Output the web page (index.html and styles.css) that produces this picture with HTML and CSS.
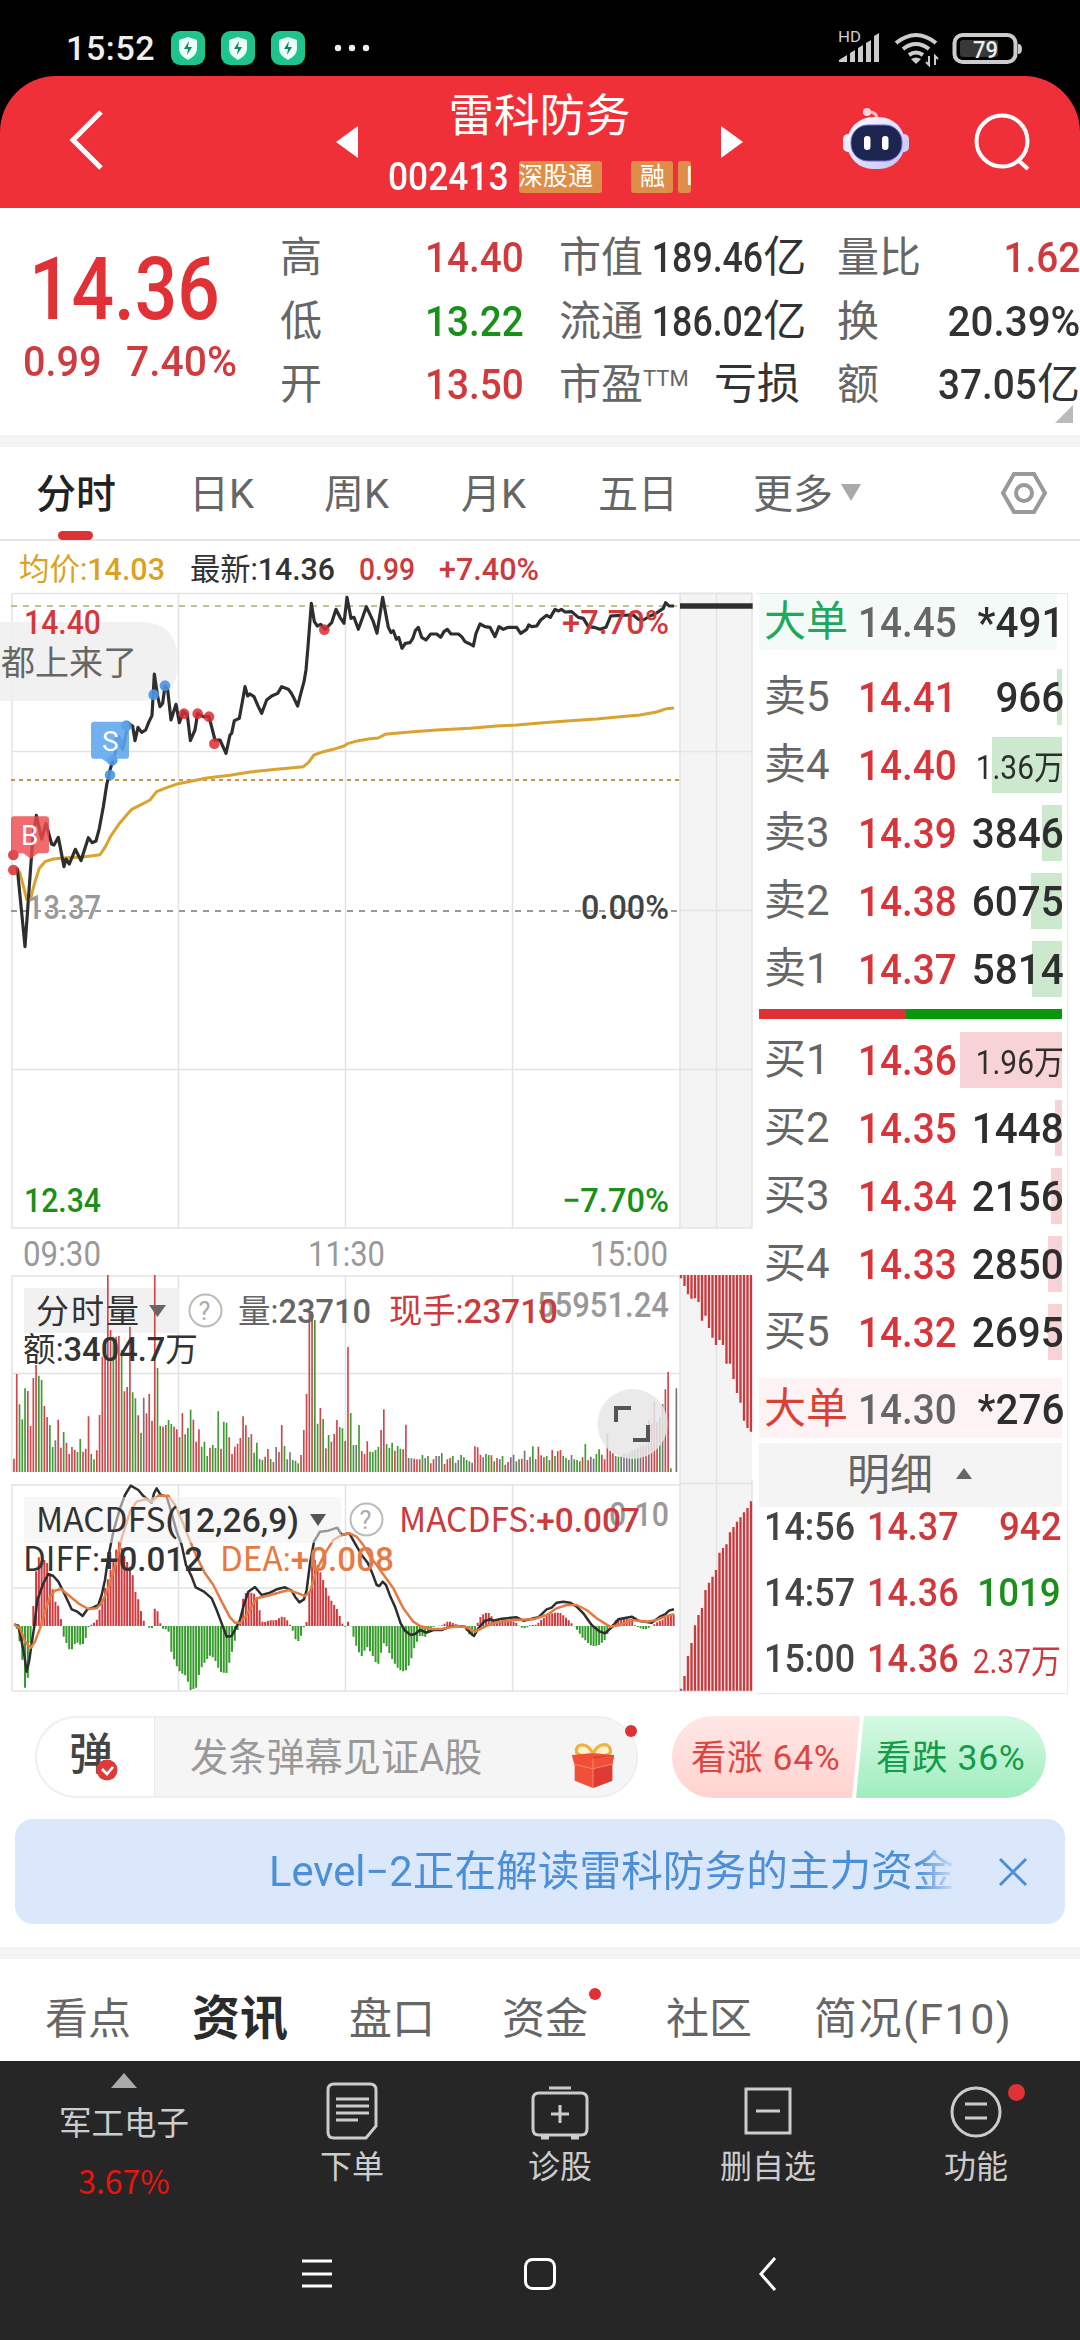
FILE: index.html
```html
<!DOCTYPE html>
<html lang="zh-CN">
<head>
<meta charset="utf-8">
<title>雷科防务 002413</title>
<link rel="stylesheet" href="styles.css">
</head>
<body>
<div class="status">
  <span class="clock">15:52</span>
  <svg class="shields" viewBox="0 0 134 34">
    <g id="sh"><rect width="34" height="34" rx="9" fill="#1fc48c"/><path d="M17 6l9 3v8c0 6-4 9-9 12-5-3-9-6-9-12V9z" fill="#eafff6"/><path d="M18 10l-5 8h4l-1 6 5-8h-4z" fill="#14865f"/></g>
    <use href="#sh" x="50"/><use href="#sh" x="100"/>
  </svg>
  <svg class="dots" viewBox="0 0 36 8"><circle cx="4" cy="4" r="3.2"/><circle cx="18" cy="4" r="3.2"/><circle cx="32" cy="4" r="3.2"/></svg>
  <svg class="radio" viewBox="0 0 190 40">
    <text x="1" y="14" font-size="15" textLength="23" lengthAdjust="spacingAndGlyphs">HD</text>
    <path d="M2 34v-2l8-5v7zM13 34V25l5-3v12zM21 34V20l5-3v17zM29 34V15l5-3v22zM37 34V8l5-3v29z"/>
    <path d="M59 15q20-16 40 0M66 21q13-10 26 0M72 27q7-5 14 0" fill="none" stroke="#ccc" stroke-width="4"/>
    <path d="M74 31q5-3 10 0l-5 5z"/>
    <path d="M92 28v9l-3-3M98 37v-9l3 3" fill="none" stroke="#ccc" stroke-width="2"/>
    <rect x="117.500" y="7" width="61" height="27" rx="8" fill="none" stroke="#ccc" stroke-width="4"/>
    <rect x="123" y="12" width="38" height="17" rx="3" fill="#383838"/>
    <path d="M181 16q4 0 4 5t-4 5z"/>
    <text x="136" y="29.500" font-size="23" font-weight="500" fill="#eee" textLength="25" lengthAdjust="spacingAndGlyphs">79</text>
  </svg>
</div>

<header class="top">
  <svg class="back" viewBox="0 0 36 62"><path d="M32 3L4 31l28 28"/></svg>
  <i class="tri left"></i>
  <div class="stock">
    <div class="name">雷科防务</div>
    <div class="code"><span class="n">002413</span><b class="tag t1">深股通</b><b class="tag t2">融</b><b class="tag t3">I</b></div>
  </div>
  <i class="tri right"></i>
  <svg class="robot" viewBox="0 0 68 64">
    <defs><linearGradient id="rb" x1="0" y1="0" x2="1" y2="1"><stop offset="0" stop-color="#fff"/><stop offset="1" stop-color="#c3c2fb"/></linearGradient></defs>
    <path d="M35 12c0-5-3-7-8-7" fill="none" stroke="#f9c2cd" stroke-width="3"/><circle cx="25" cy="5" r="4" fill="#fbd3da"/>
    <rect x="1" y="27" width="12" height="18" rx="5" fill="#eceafd"/><rect x="55" y="27" width="12" height="18" rx="5" fill="#cfcdfb"/>
    <rect x="5" y="10" width="58" height="52" rx="26" fill="url(#rb)"/>
    <rect x="9" y="18" width="51" height="36" rx="17" fill="#1b2550" stroke="#7567d8" stroke-width="1"/>
    <rect x="22" y="29" width="6.500" height="14" rx="3.200" fill="#fff"/><rect x="40" y="29" width="6.500" height="14" rx="3.200" fill="#fff"/>
  </svg>
  <svg class="search" viewBox="0 0 58 58"><circle cx="28" cy="28" r="25.500"/><path d="M44 47l10 9"/></svg>
</header>

<section class="quote">
  <div class="last">
    <div class="big"><span class="n">14.36</span></div>
    <div class="chg"><span class="n c1">0.99</span><span class="n">7.40%</span></div>
  </div>
  <dl class="qcol q1"><dt>高</dt><dd class="r"><span class="n">14.40</span></dd><dt>低</dt><dd class="g"><span class="n">13.22</span></dd><dt>开</dt><dd class="r"><span class="n">13.50</span></dd></dl>
  <dl class="qcol q2"><dt>市值</dt><dd><span class="n">189.46</span>亿</dd><dt>流通</dt><dd><span class="n">186.02</span>亿</dd><dt>市盈<sup>TTM</sup></dt><dd>亏损</dd></dl>
  <dl class="qcol q3"><dt>量比</dt><dd class="r"><span class="n">1.62</span></dd><dt>换</dt><dd><span class="n">20.39%</span></dd><dt>额</dt><dd><span class="n">37.05</span>亿</dd></dl>
  <i class="corner"></i>
</section>

<nav class="periods">
  <span class="on">分时</span><span>日K</span><span>周K</span><span>月K</span><span>五日</span><span class="more">更多<i></i></span>
  <svg viewBox="0 0 46 44"><path d="M13 3h20l11 19-11 19H13L2 22z"/><circle cx="23" cy="22" r="8"/></svg>
</nav>

<main class="trade">
  <div class="charts">
    <svg class="info" viewBox="0 541 756 48">
      <g font-size="31">
        <text x="19" y="580" fill="#dba21f" textLength="146" lengthAdjust="spacingAndGlyphs">均价:<tspan font-weight="500">14.03</tspan></text>
        <text x="190" y="580" fill="#333" textLength="145" lengthAdjust="spacingAndGlyphs">最新:<tspan font-weight="500">14.36</tspan></text>
        <g fill="#cb3a3c" font-weight="500"><text x="359" y="580" textLength="56" lengthAdjust="spacingAndGlyphs">0.99</text>
        <text x="439" y="580" textLength="100" lengthAdjust="spacingAndGlyphs">+7.40%</text></g>
      </g>
    </svg>
    <svg class="price" viewBox="0 589 756 643">
      <rect x="679" y="592" width="73" height="636" fill="#f4f4f4"/>
      <path class="grid" d="M12 593.500H752M12 751.500H752M12 1069.500H752M12 1228H752M12 593V1228M178.500 593V1228M345.500 593V1228M512.500 593V1228M680 593V1228M716.500 593V1228M752 593V1228M680 910.500H752"/>
      <path d="M11 606H679" stroke="#b3a96f" stroke-width="1.500" stroke-dasharray="6 6" fill="none"/>
      <path d="M11 780H679" stroke="#c69846" stroke-width="2" stroke-dasharray="4 4" fill="none"/>
      <path d="M11 911H679" stroke="#999" stroke-width="2" stroke-dasharray="6 6" fill="none"/>
      <path d="M0 622H140q38 0 38 39.500T140 701H0z" fill="#eee" opacity=".85"/>
      <text x="1" y="675" font-size="34" fill="#666" textLength="136">都上来了</text>
      <g transform="translate(0 540) scale(.33333)" fill="none" stroke-linejoin="round">
        <polyline stroke="#d9a32f" stroke-width="9" points="48,982 60,1000 72,1045 80,1078 92,1075 105,1025 118,985 135,965 160,957 200,953 250,951 300,944 315,922 333,887 360,848 395,808 425,793 450,780 470,755 500,743 535,731 580,722 620,714 690,706 750,696 830,688 910,680 925,668 942,645 970,635 1000,628 1032,618 1045,610 1075,602 1110,596 1135,594 1155,583 1230,576 1310,570 1410,565 1490,558 1550,555 1630,548 1710,542 1790,537 1860,530 1920,525 1970,516 2000,506 2022,504"/>
        <polyline stroke="#2e2e2e" stroke-width="9.500" points="52,985 75,1220 95,940 100,880 109,826 125,897 138,850 155,912 162,915 175,892 192,980 198,957 208,972 226,928 243,962 265,893 276,908 288,903 298,865 310,800 320,735 330,690 345,640 357,590 368,628 385,550 398,558 405,602 414,562 425,577 437,570 447,545 456,527 463,402 473,470 480,500 488,490 495,438 503,450 513,540 528,493 538,548 550,515 562,525 571,602 585,570 593,520 610,530 627,530 645,600 660,600 678,640 690,585 695,580 703,542 718,535 728,480 735,440 743,468 750,462 762,470 775,500 785,520 800,480 815,468 833,460 845,440 865,448 873,458 882,475 893,498 900,470 912,425 918,390 924,320 934,190 943,245 952,258 962,253 975,268 995,248 1008,208 1020,232 1032,250 1041,172 1053,235 1062,232 1075,268 1087,235 1099,200 1120,245 1131,280 1148,172 1165,262 1173,278 1180,272 1189,298 1196,292 1206,325 1216,310 1230,308 1238,296 1246,272 1255,262 1265,292 1278,300 1292,282 1310,282 1322,292 1332,275 1342,268 1353,282 1375,282 1385,290 1395,305 1410,312 1420,318 1428,280 1440,252 1455,260 1470,262 1485,290 1497,260 1510,268 1525,262 1550,262 1562,280 1580,268 1586,255 1595,260 1610,258 1622,240 1640,226 1651,232 1665,208 1676,213 1684,208 1695,216 1715,215 1735,232 1750,235 1765,260 1782,262 1800,268 1818,262 1832,228 1860,226 1900,225 1915,238 1930,240 1950,228 1965,222 1980,212 1990,205 1997,188 2007,198 2022,198"/>
        <path d="M2040 198H2258" stroke="#2e2e2e" stroke-width="17"/>
        <g fill="#db2b33" opacity=".85"><circle cx="40" cy="945" r="16"/><circle cx="40" cy="990" r="16"/><circle cx="552" cy="521" r="16"/><circle cx="593" cy="521" r="16"/><circle cx="627" cy="530" r="16"/><circle cx="643" cy="611" r="16"/><circle cx="973" cy="269" r="16"/></g>
        <g fill="#4e93e4" opacity=".9"><circle cx="495" cy="437" r="16"/><circle cx="461" cy="464" r="16"/><circle cx="379" cy="557" r="16"/><circle cx="354" cy="606" r="16"/><circle cx="337" cy="661" r="16"/><circle cx="330" cy="705" r="16"/></g>
        <path d="M282 545h96q9 0 9 9v93q0 9-9 9h-28l-25 14-20-14h-23q-9 0-9-9v-93q0-9 9-9z" fill="#5ea5ee" opacity=".88"/>
        <path d="M42 829h96q9 0 9 9v93q0 9-9 9h-24l-22 16-22-16H42q-9 0-9-9v-93q0-9 9-9z" fill="#ec4a4d" opacity=".82"/>
      </g>
      <text x="102" y="751" font-size="28" fill="#fff">S</text><text x="21" y="845" font-size="28" fill="#fff">B</text>
      <g font-size="34" font-weight="500">
        <text x="24" y="634" fill="#d2393d" textLength="77" lengthAdjust="spacingAndGlyphs">14.40</text>
        <text x="27" y="919" fill="#999" textLength="74" lengthAdjust="spacingAndGlyphs">13.37</text>
        <text x="24" y="1212" fill="#1a8f1a" textLength="77" lengthAdjust="spacingAndGlyphs">12.34</text>
        <text x="562" y="634" fill="#d2393d" textLength="107" lengthAdjust="spacingAndGlyphs">+7.70%</text>
        <text x="581" y="919" fill="#444" textLength="88" lengthAdjust="spacingAndGlyphs">0.00%</text>
        <text x="562" y="1212" fill="#1a8f1a" textLength="107" lengthAdjust="spacingAndGlyphs">−7.70%</text>
      </g>
    </svg>
    <svg class="axis" viewBox="0 1232 756 40">
      <g font-size="35" fill="#999"><text x="23" y="1266" textLength="78" lengthAdjust="spacingAndGlyphs">09:30</text><text x="308" y="1266" textLength="77" lengthAdjust="spacingAndGlyphs">11:30</text><text x="590" y="1266" textLength="78" lengthAdjust="spacingAndGlyphs">15:00</text></g>
    </svg>
    <svg class="volume" viewBox="0 1272 756 208">
      <rect x="680" y="1275" width="72" height="205" fill="#f4f4f4"/>
      <path class="grid" d="M12 1276H680M12 1373.500H680M12 1275V1472M178.500 1275V1472M345.500 1275V1472M512.500 1275V1472M680 1275V1480M716.500 1275V1480"/>
      <rect x="24" y="1288" width="155" height="45" fill="#efefef" opacity=".9"/>
      <g transform="translate(0 1180) scale(.33333)" fill="none" stroke-width="5"><path id="vr" stroke="#d0474b"/><path id="vg" stroke="#3f9b34"/><path id="vk" stroke="#77737a"/><path id="vside" stroke="#c9393e" stroke-width="7"/></g>
      <g font-size="33" fill="#333">
        <text x="36" y="1323" textLength="103">分时量</text><path d="M149 1305h17l-8.500 12z" fill="#666"/>
        <text x="23" y="1361" textLength="175" lengthAdjust="spacingAndGlyphs">额:<tspan font-weight="500">3404.7</tspan>万</text>
        <text x="238" y="1323" fill="#666" textLength="133" lengthAdjust="spacingAndGlyphs">量:<tspan font-weight="500">23710</tspan></text>
      </g>
      <circle cx="205.500" cy="1310.500" r="16" fill="none" stroke="#bbb" stroke-width="2"/><text x="198.500" y="1320" font-size="25" fill="#aaa">?</text>
      <text x="537" y="1317" font-size="35" fill="#999" font-weight="500" textLength="132" lengthAdjust="spacingAndGlyphs">55951.24</text>
      <text x="389" y="1323" font-size="34" fill="#cb3a3c" textLength="169" lengthAdjust="spacingAndGlyphs">现手:<tspan font-weight="500">23710</tspan></text>
      <circle cx="632.500" cy="1424" r="35" fill="#e7e7e7" opacity=".86"/>
      <path d="M616 1422v-14h15M633 1440h15v-15" fill="none" stroke="#555" stroke-width="4"/>
    </svg>
    <svg class="macd" viewBox="0 1480 756 214">
      <rect x="680" y="1480" width="72" height="211" fill="#f4f4f4"/>
      <path class="grid" d="M12 1485H680M680 1483.500H752M12 1588H680M12 1691H752M12 1484V1691M178.500 1484V1691M345.500 1484V1691M512.500 1484V1691M680 1480V1691M716.500 1480V1691M752 1480V1691"/>
      <g transform="translate(0 1180) scale(.33333)" fill="none" stroke-width="6"><path id="mr" stroke="#d2393d"/><path id="mg" stroke="#359b2a"/><path id="mside" stroke="#c9393e" stroke-width="7"/>
        <g stroke-width="7.500" stroke-linejoin="round">
        <polyline stroke="#2e2e2e" points="42,1333 55,1337 62,1370 72,1420 80,1475 88,1440 95,1390 102,1345 112,1260 130,1210 145,1182 160,1188 175,1205 195,1245 215,1288 232,1295 248,1308 262,1288 280,1282 295,1275 305,1245 315,1200 325,1130 340,1055 360,985 375,945 392,917 415,930 430,948 445,960 455,968 462,940 470,925 482,945 500,950 515,1000 530,1055 545,1095 558,1155 575,1190 587,1222 612,1235 635,1255 650,1290 665,1330 680,1370 695,1368 707,1345 720,1320 730,1280 745,1235 765,1221 785,1245 810,1238 830,1228 855,1222 875,1232 885,1250 898,1267 912,1258 920,1230 930,1150 942,1085 960,1055 985,1052 1012,1043 1025,1065 1048,1060 1065,1090 1085,1125 1103,1148 1115,1175 1130,1215 1138,1218 1148,1205 1158,1215 1172,1252 1185,1280 1202,1330 1215,1352 1232,1365 1245,1362 1260,1350 1280,1358 1300,1350 1325,1350 1350,1340 1370,1338 1395,1340 1410,1358 1422,1368 1435,1345 1455,1322 1472,1318 1480,1322 1505,1316 1550,1312 1570,1322 1590,1318 1615,1312 1640,1288 1655,1283 1670,1268 1690,1265 1710,1268 1730,1280 1750,1300 1775,1335 1800,1355 1815,1360 1835,1342 1855,1318 1895,1310 1915,1322 1955,1328 1980,1310 1995,1303 2007,1292 2022,1288"/>
        <polyline stroke="#e57a43" points="42,1333 60,1345 75,1385 92,1403 105,1385 120,1345 135,1295 150,1250 165,1232 183,1227 205,1245 235,1270 265,1287 290,1285 305,1270 325,1225 345,1160 365,1075 390,995 410,965 435,958 455,965 475,947 505,947 525,975 545,1020 565,1070 590,1130 615,1180 640,1215 665,1265 690,1312 705,1328 722,1328 740,1305 770,1255 800,1248 830,1240 865,1230 895,1240 915,1248 930,1235 950,1170 975,1120 1000,1080 1025,1065 1048,1060 1070,1070 1090,1095 1110,1130 1130,1155 1155,1190 1180,1225 1210,1285 1240,1325 1260,1338 1295,1347 1325,1347 1370,1338 1400,1342 1425,1355 1455,1340 1485,1328 1540,1320 1600,1318 1640,1305 1670,1285 1700,1275 1730,1275 1760,1290 1790,1315 1830,1340 1860,1335 1895,1320 1940,1325 1970,1320 2000,1308 2022,1303"/></g>
      </g>
      <rect x="24" y="1497" width="317" height="46" fill="#f1f1f1" opacity=".55"/>
      <g font-size="34" fill="#333">
        <text x="36" y="1532" textLength="263" lengthAdjust="spacingAndGlyphs"><tspan class="cj">MACDFS</tspan><tspan font-weight="500">(12,26,9)</tspan></text><path d="M310 1514h16l-8 12z" fill="#555"/>
        <text x="23" y="1571" textLength="180" lengthAdjust="spacingAndGlyphs"><tspan class="cj">DIFF</tspan>:<tspan font-weight="500">+0.012</tspan></text>
        <text x="220" y="1571" fill="#e57a43" textLength="174" lengthAdjust="spacingAndGlyphs"><tspan class="cj">DEA</tspan>:<tspan font-weight="500">+0.008</tspan></text>
      </g>
      <circle cx="366.500" cy="1519.500" r="16" fill="none" stroke="#bbb" stroke-width="2"/><text x="359.500" y="1529" font-size="25" fill="#aaa">?</text>
      <text x="609" y="1526" font-size="34" fill="#999" font-weight="500" textLength="60" lengthAdjust="spacingAndGlyphs">0.10</text>
      <text x="399" y="1532" font-size="34" fill="#cb3a3c" textLength="241" lengthAdjust="spacingAndGlyphs"><tspan class="cj">MACDFS</tspan>:<tspan font-weight="500">+0.007</tspan></text>
    </svg>
  </div>

  <aside class="book">
    <div class="row large sell"><em>大单</em><span class="n p">14.45</span><span class="n v">*491</span></div>
    <div class="rows asks">
      <div class="row"><em>卖5</em><span class="n p">14.41</span><span class="n v">966</span><i style="width:5px"></i></div>
      <div class="row"><em>卖4</em><span class="n p">14.40</span><span class="v s">1.36万</span><i style="width:70px"></i></div>
      <div class="row"><em>卖3</em><span class="n p">14.39</span><span class="n v">3846</span><i style="width:20px"></i></div>
      <div class="row"><em>卖2</em><span class="n p">14.38</span><span class="n v">6075</span><i style="width:31px"></i></div>
      <div class="row"><em>卖1</em><span class="n p">14.37</span><span class="n v">5814</span><i style="width:30px"></i></div>
    </div>
    <div class="ratio"></div>
    <div class="rows bids">
      <div class="row"><em>买1</em><span class="n p">14.36</span><span class="v s">1.96万</span><i style="width:102px"></i></div>
      <div class="row"><em>买2</em><span class="n p">14.35</span><span class="n v">1448</span><i style="width:7px"></i></div>
      <div class="row"><em>买3</em><span class="n p">14.34</span><span class="n v">2156</span><i style="width:11px"></i></div>
      <div class="row"><em>买4</em><span class="n p">14.33</span><span class="n v">2850</span><i style="width:14px"></i></div>
      <div class="row"><em>买5</em><span class="n p">14.32</span><span class="n v">2695</span><i style="width:14px"></i></div>
    </div>
    <div class="row large buy"><em>大单</em><span class="n p">14.30</span><span class="n v">*276</span></div>
    <div class="detail">明细<i></i></div>
    <div class="ticks">
      <div><span class="n t">14:56</span><span class="n p">14.37</span><span class="n v">942</span></div>
      <div><span class="n t">14:57</span><span class="n p">14.36</span><span class="n v g">1019</span></div>
      <div><span class="n t">15:00</span><span class="n p">14.36</span><span class="v s">2.37万</span></div>
    </div>
  </aside>
</main>

<section class="social">
  <div class="danmu">
    <div class="ico">弹<svg viewBox="0 0 22 22"><circle cx="11" cy="11" r="10.500" fill="#dd3a38"/><path d="M6 10l5 5 6-7" fill="none" stroke="#fff" stroke-width="2.600"/></svg></div>
    <div class="ph">发条弹幕见证A股
      <svg viewBox="0 0 48 54"><path d="M24 14C18 0 4 2 6 12q3 6 18 2Q40 18 43 12C44 1 30 0 24 14z" fill="#fff3cf" stroke="#efb23e" stroke-width="3.500"/><path d="M1 15l23-2 23 2-2 11v17L24 51 4 43V26z" fill="#ee5038"/><path d="M24 17v34l21-8V26l2-11z" fill="#df3b35"/><path d="M1 15l23 4 23-4-2 10-21 5-20-5z" fill="#f0503a"/><path d="M24 19v32M3 25l21 5 21-5" stroke="#ff8a66" fill="none"/></svg>
    </div>
    <i class="dot"></i>
  </div>
  <div class="vote"><span class="up">看涨 64%</span><span class="down">看跌 36%</span></div>
</section>

<section class="banner"><p>Level−2正在解读雷科防务的主力资金</p><svg viewBox="0 0 28 28"><path d="M1 1l26 26M27 1L1 27"/></svg></section>

<nav class="tabs"><span>看点</span><span class="on">资讯</span><span>盘口</span><span>资金<i class="dot"></i></span><span>社区</span><span class="f10">简况(F10)</span></nav>

<footer>
  <div class="tools">
    <div class="idx"><i></i><b>军工电子</b><span>3.67%</span></div>
    <div><svg viewBox="0 0 60 60"><path d="M12 3h36q6 0 6 6v36l-10 12H12q-6 0-6-6V9q0-6 6-6zM14 18h33M14 25h33M14 32h33M14 39h22"/></svg>下单</div>
    <div><svg viewBox="0 0 60 60"><path d="M9 12h42q6 0 6 6v30q0 6-6 6H9q-6 0-6-6V18q0-6 6-6zM19 7h22M30 24v18M21 33h18M11 57h8M41 57h8"/></svg>诊股</div>
    <div><svg viewBox="0 0 60 60"><path d="M8 8h44v44H8zM18 30h24"/></svg>删自选</div>
    <div><svg viewBox="0 0 60 60"><circle cx="30" cy="31" r="24"/><path d="M19 23h22M19 37h22"/></svg>功能<i class="dot"></i></div>
  </div>
  <svg class="sys" viewBox="0 0 1080 60"><path d="M302 16h30M302 29h30M302 41h30"/><rect x="525.500" y="14.500" width="29" height="29" rx="7"/><path d="M775 13l-14 16 14 16"/></svg>
</footer>
<script src="script.js"></script>
</body>
</html>
```
FILE: styles.css
```css
* { box-sizing: border-box; }
body { margin: 0; width: 1080px; height: 2340px; overflow: hidden; background: #fff; color: #333; font-family: Roboto, "Noto Sans CJK SC", sans-serif; font-size: 42px; }
i, em, b { font-style: normal; font-weight: 400; }
svg { display: block; flex: none; overflow: visible; }
.cj { font-family: "Noto Sans CJK SC", sans-serif; }
.n { display: inline-block; font-weight: 500; transform: scaleX(.9); transform-origin: left; white-space: nowrap; }
.r { color: #d03a3c; }
.g { color: #1a8f1a !important; }
.dot { display: block; width: 12px; height: 12px; border-radius: 50%; background: #e03236; }

/* The black bar runs on behind the header's rounded corners. */
.status { height: 140px; margin-bottom: -64px; padding: 16px 60px 60px 66px; background: #000; display: flex; align-items: center; }
.clock { width: 105px; font: 500 34px/40px Roboto, sans-serif; letter-spacing: .6px; color: #eee; }
.shields { width: 134px; height: 34px; }
.dots { width: 36px; height: 8px; margin-left: 29px; fill: #eee; }
.radio { width: 190px; height: 40px; margin-left: auto; fill: #ccc; margin-right: -7px; }

.top { position: relative; height: 132px; background: #f03038; border-radius: 56px 56px 0 0; display: flex; align-items: center; padding: 0 50px 0 69px; color: #fff; }
.back { width: 36px; height: 62px; fill: none; stroke: #fff; stroke-width: 5; margin-top: -5px; }
.tri { width: 0; height: 0; border: 16px solid transparent; flex: none; margin-top: -1px; }
.tri.left { border-right: 22px solid #fff; border-left: 0; margin-left: 231px; }
.tri.right { border-left: 22px solid #fff; border-right: 0; margin-left: 0; }
.stock { width: 363px; height: 132px; text-align: center; padding-top: 8px; }
.name { font-size: 45.5px; line-height: 66px; }
.code { display: flex; align-items: center; height: 54px; padding-left: 30px; }
.code .n { width: 131px; font-size: 38px; text-align: left; transform: scaleX(.93); }
.tag { height: 32px; line-height: 32px; font-size: 25px; background: #df8e49; border-radius: 3px; overflow: hidden; text-align: left; }
.t1 { width: 83px; text-indent: -1px; }
.t2 { width: 42px; margin-left: 29px; text-indent: 9px; }
.t3 { width: 13px; margin-left: 5px; text-indent: 8px; }
.robot { width: 68px; height: 64px; margin-left: 99px; margin-top: -7px; }
.search { width: 58px; height: 58px; margin-left: auto; fill: none; stroke: #fff; stroke-width: 4; margin-right: -2px; }

.quote { height: 239px; border-bottom: 12px solid #f3f3f3; display: flex; padding-top: 18px; position: relative; }
.last { width: 280px; color: #e03236; }
.big { font-size: 87px; line-height: 88px; padding: 19px 0 0 29px; height: 107px; }
.big .n { transform: scaleX(.86); }
.chg { font-size: 43px; line-height: 56px; padding-left: 23px; color: #cf3b3e; display: flex; }
.chg .c1 { width: 103px; }
.chg .n { transform: scaleX(.92); }
.chg .n + .n { transform: scaleX(.95); }
.qcol { margin: 0; display: grid; grid-template-rows: repeat(3, 63.5px); line-height: 63px; white-space: nowrap; }
.qcol dt { color: #666; }
.qcol dd { margin: 0; text-align: right; font-size: 43px; }
.qcol .n { transform-origin: right; }
.q1 { width: 244px; grid-template-columns: 60px 184px; }
.q2 { width: 241px; margin-left: 35px; grid-template-columns: 90px 151px; }
.q3 { width: 243px; margin-left: 37px; grid-template-columns: 85px 158px; }
.q2 .n { margin-left: -20px; transform: scaleX(.83); }
.q3 .n { transform: scaleX(.9); }
.q3 dd:nth-of-type(2) .n { transform: scaleX(.94); }
.qcol sup { font-size: 22px; line-height: 0; vertical-align: 13px; }
.corner { position: absolute; right: 7px; top: 197px; border: 9px solid transparent; border-right-color: #bbb; border-bottom-color: #bbb; }

.periods { height: 94px; border-bottom: 2px solid #e6e6e6; display: flex; align-items: center; position: relative; font-size: 40px; color: #666; padding-left: 36px; line-height: 92px; }
.periods span { width: 137px; padding-top: 3px; }
.periods span:nth-child(1) { width: 153px; }
.periods span:nth-child(2) { width: 135px; }
.periods .on { color: #222; font-weight: 500; position: relative; }
.periods .on::after { content: ""; position: absolute; left: 22px; bottom: 1px; width: 35px; height: 9px; border-radius: 5px; background: #dd3236; }
.periods span:nth-child(5) { width: 155px; }
.periods .more { width: auto; flex: 1; display: flex; align-items: center; gap: 8px; }
.more i { border: 10px solid transparent; border-top: 17px solid #aaa; border-bottom: 0; margin-top: -4px; }
.periods svg { width: 46px; height: 44px; margin-right: 33px; fill: none; stroke: #999; stroke-width: 4; }

.trade { height: 1153px; display: flex; }
.charts { width: 756px; display: flex; flex-direction: column; }
.info { height: 48px; } .price { height: 643px; } .axis { height: 40px; } .volume { height: 208px; } .macd { height: 214px; }
.grid { stroke: #e3e3e3; stroke-width: 1.5; fill: none; }
.book { width: 312px; margin-top: 52px; height: 1101px; border: 1px solid #e9e9e9; border-width: 1px 1px 1px 0; padding: 0 5px 0 3px; }
.row { position: relative; display: grid; grid-template-columns: 94px 106px 100px; padding-left: 5px; align-items: center; height: 68px; line-height: 68px; font-size: 43px; }
.row em { color: #666; font-size: 42px; }
.p { color: #d8353a; transform: scaleX(.9); }
.v { justify-self: end; transform-origin: right; color: #2e2e2e; position: relative; z-index: 1; transform: scaleX(.94); }
.v.s { font-size: 32.5px; top: 3px; white-space: nowrap; transform: scaleX(.92); }
.row i { position: absolute; right: 0; top: 6px; height: 56px; background: #cce9cd; }
.bids .row i { background: #f8d3d6; }
.large { height: 56px; line-height: 56px; width: 298px; grid-template-columns: 94px 106px 100px; }
.large .p { color: #666; }
.sell { background: #f3faf8; } .sell em { color: #1ca95c; }
.asks { padding-top: 13px; height: 359px; }
.ratio { height: 10px; background: linear-gradient(90deg, #e03236 147px, #0a960a 147px); }
.bids { padding-top: 7px; height: 352px; margin-bottom: 7px; }
.buy { height: 60px; line-height: 62px; background: #fdf3f4; width: 303px; } .buy em { color: #dc4034; }
.detail { margin-top: 5px; height: 64px; line-height: 68px; background: #f4f4f4; color: #666; font-size: 43px; padding-left: 88px; display: flex; align-items: center; gap: 23px; }
.detail i { border: 8px solid transparent; border-bottom: 11px solid #666; border-top: 0; margin-top: -3px; }
.ticks { margin-top: -13px; }
.ticks div { display: grid; grid-template-columns: 103px 97px 97px; padding-left: 5px; height: 66px; line-height: 66px; font-size: 39px; }
.ticks .t { color: #444; transform: scaleX(.92); }
.ticks .p { color: #cf393c; transform: scaleX(.92); }
.ticks .v { color: #cf393c; }

.social { height: 125px; display: flex; padding: 22px 0 0 35px; }
.danmu { width: 603px; height: 82px; border: 2px solid #efefef; border-radius: 41px; display: flex; position: relative; line-height: 80px; }
.ico { width: 117px; padding-left: 32px; font-size: 44px; font-weight: 500; line-height: 74px; position: relative; color: #444; }
.ico svg { position: absolute; width: 22px; height: 22px; left: 59px; top: 41px; }
.ph { flex: 1; display: flex; background: #f5f5f5; border-radius: 0 40px 40px 0; border-left: 1px solid #e8e8e8; padding-left: 35px; font-size: 38.2px; color: #999; }
.ph svg { width: 44px; height: 50px; margin: 23px 0 0 89px; }
.danmu .dot { position: absolute; right: -1px; top: 7px; }
.vote { width: 374px; height: 82px; margin-left: 34px; border-radius: 41px; overflow: hidden; display: flex; position: relative; font-size: 35.5px; letter-spacing: .6px; line-height: 84px; white-space: nowrap; }
.vote span { flex: none; }
.up { width: 194px; padding-left: 19px; color: #dc4641; background: linear-gradient(#ffe7e6, #ffd3cf); clip-path: polygon(0 0, 188px 0, 180px 100%, 0 100%); }
.down { width: 192px; margin-left: -12px; padding-left: 22px; color: #159c4a; background: linear-gradient(#d5f9e2, #a0edbf); clip-path: polygon(10px 0, 100% 0, 100% 100%, 2px 100%); }

.banner { margin: 0 15px; height: 105px; border-radius: 18px; background: #dbe8fb; display: flex; align-items: center; color: #4c8fd9; }
.banner p { margin: 0 0 0 254px; width: 690px; font-size: 41.7px; line-height: 108px; white-space: nowrap; overflow: hidden; -webkit-mask-image: linear-gradient(90deg, #000 94%, transparent); mask-image: linear-gradient(90deg, #000 94%, transparent); }
.banner svg { width: 28px; height: 28px; margin-left: 40px; fill: none; stroke: #4c8fd9; stroke-width: 3; }

.tabs { margin-top: 23px; height: 114px; border-top: 12px solid #f3f3f3; display: grid; grid-template-columns: 147px 157px 153px 164px 148px auto; padding: 7px 0 0 45px; font-size: 43px; line-height: 106px; color: #666; white-space: nowrap; }
.tabs span { position: relative; }
.tabs .on { color: #2b2b2b; font-weight: 700; font-size: 48px; }
.tabs .dot { position: absolute; left: 87px; top: 22px; }
.f10 { letter-spacing: 1.5px; }

footer { height: 279px; background: #262626; color: #ccc; }
.tools { display: grid; grid-template-columns: 248px 208px 208px 208px 208px; height: 171px; font-size: 32px; line-height: 52px; text-align: center; }
.tools div { position: relative; padding-top: 20px; }
.tools svg { width: 60px; height: 60px; margin: 0 auto; fill: none; stroke: #ccc; stroke-width: 3; }
.idx b, .idx span { display: block; }
.tools .idx { padding-top: 12px; }
.tools .idx i { display: block; width: 0; margin: 0 auto; border: 13px solid transparent; border-bottom: 15px solid #aaa; border-top: 0; }
.idx b { line-height: 73px; font-size: 32.5px; }
.idx span { color: #e8140f; font-family: "Noto Sans CJK SC", sans-serif; font-size: 32px; line-height: 38px; }
.tools .dot { position: absolute; width: 17px; height: 17px; left: 136px; top: 23px; }
.sys { width: 1080px; height: 60px; margin-top: 13px; fill: none; stroke: #fff; stroke-width: 3; }
```
FILE: script.js
```js
// Minute volume: colour key followed by the y of the bar's top, one entry per minute.
const volume = `r836 r582 g673 g718 g625 r633 r738 r594 r555 g587 g600 r678 r711 g735 g801 k781 r719 r803 g756 r788 r822 r801 r809 g816 g777 r815 r806 r709 g822 g838 r811 r705 r530 r480 r285 r450 g470 r470 r468 g510 r634 r621 r440 g637 g655 r706 g758 k653 r700 r642 r722 r285 g564 g738 r740 r735 g720 g732 r740 r748 g771 r699 g763 g744 g689 r719 r785 r748 g800 g785 g828 r803 g795 g804 g694 r806 g725 g728 r772 r822 r800 r791 r774 r709 r736 g772 r762 g818 g788 g837 g840 r830 r807 g837 r846 k801 r816 r735 g798 k838 k817 g840 g842 g850 r825 r750 r642 r400 r395 g420 g731 r684 g717 r805 g765 r785 r762 r720 g741 g745 r783 r501 g699 g795 k795 g735 r813 r822 r784 g815 g816 g810 g800 r750 r688 g792 g804 g788 r812 g798 g806 r808 r734 k834 k835 r836 r838 r838 g825 k834 g828 r850 r838 k828 k828 g819 r852 r838 r834 g828 k848 k840 g825 g832 g840 k844 k848 r799 r802 r824 k832 g822 g825 r826 g844 r834 k838 g828 r854 r846 k832 k824 k844 g838 r836 k812 r840 k830 g799 k838 r800 r826 r832 g828 g840 r810 g828 r814 r810 g828 g834 k840 k825 g838 g840 g844 r832 g792 r840 k830 k836 g822 g808 r824 r838 r758 r812 r820 k828 g830 k828 k820 k824 k818 k812 g808 k805 k798 r796 r796 k720 r730 r664 r725 g710 k672 r628 r576 g865 x876 k625`.split(" ");
const step = 8.28, x0 = 42;
const buckets = { r: "", g: "", k: "", x: "" };
volume.forEach((v, i) => { buckets[v[0]] += `M${(x0 + i * step).toFixed(1)} 876V${v.slice(1)}`; });
for (const c of "rgk") document.getElementById("v" + c).setAttribute("d", buckets[c]);

// Call-auction bars in the narrow right-hand panels.
const auctionVol = [295,318,343,356,355,366,422,407,444,473,495,480,495,551,551,597,639,668,722,744,755];
const auctionMacd = [1526,1488,1428,1389,1336,1305,1284,1230,1208,1190,1170,1118,1104,1093,1057,1041,1025,1012,997,984,964];
const side = (a, base) => a.map((y, i) => `M${(2043 + i * 10.5).toFixed(1)} ${base}V${y}`).join("");
document.getElementById("vside").setAttribute("d", side(auctionVol, 285));
document.getElementById("mside").setAttribute("d", side(auctionMacd, 1532));

// MACD histogram: key points, interpolated at every minute.
const keys = `50,1345 58,1380 67,1440 76,1532 84,1490 91,1400 95,1338 100,1278 109,1165 117,1130 125,1142 134,1140 142,1150 150,1190 158,1228 166,1265 175,1278 183,1318 187,1338 191,1370 199,1388 207,1408 215,1410 223,1392 233,1388 241,1394 249,1392 257,1375 265,1343 273,1335 282,1328 290,1320 298,1292 306,1260 315,1225 323,1200 331,1172 340,1140 348,1110 356,1082 364,1100 373,1128 381,1145 389,1158 397,1180 406,1235 414,1255 422,1290 430,1320 439,1338 447,1343 455,1348 460,1330 463,1286 471,1287 478,1320 483,1338 490,1347 505,1350 513,1412 521,1435 535,1470 545,1480 558,1488 572,1530 588,1525 600,1470 615,1445 632,1425 645,1440 660,1475 672,1478 678,1485 690,1440 700,1400 712,1352 718,1338 722,1315 730,1250 738,1238 755,1238 765,1242 775,1262 783,1320 790,1328 805,1322 830,1320 845,1310 855,1312 865,1325 875,1342 890,1388 900,1378 908,1350 913,1338 920,1325 925,1268 935,1160 944,1138 953,1155 962,1180 975,1215 985,1245 1000,1272 1010,1285 1020,1310 1027,1330 1034,1345 1041,1322 1050,1330 1056,1355 1068,1395 1083,1432 1100,1400 1115,1420 1132,1458 1140,1438 1148,1390 1156,1390 1165,1412 1175,1435 1190,1460 1206,1475 1220,1470 1232,1445 1240,1410 1248,1395 1256,1368 1280,1370 1288,1348 1305,1338 1330,1335 1340,1325 1350,1325 1370,1335 1390,1340 1410,1365 1422,1368 1430,1338 1435,1322 1445,1305 1460,1298 1470,1300 1480,1320 1495,1325 1510,1318 1535,1322 1550,1330 1562,1342 1577,1346 1590,1336 1610,1334 1620,1322 1630,1315 1645,1305 1660,1298 1680,1298 1695,1310 1710,1325 1722,1338 1732,1350 1745,1370 1760,1385 1775,1398 1795,1397 1810,1385 1820,1372 1827,1340 1835,1338 1845,1322 1858,1315 1875,1314 1895,1320 1905,1336 1920,1345 1935,1348 1950,1342 1960,1335 1975,1325 1995,1315 2010,1305 2022,1303`.split(" ").map(p => p.split(",").map(Number));
let red = "", green = "", k = 0;
for (let x = 50.3; x <= 2022; x += step) {
  while (k < keys.length - 2 && keys[k + 1][0] < x) k++;
  const [ax, ay] = keys[k], [bx, by] = keys[k + 1];
  const y = ay + (by - ay) * Math.max(0, Math.min(1, (x - ax) / (bx - ax)));
  const bar = `M${x.toFixed(1)} 1338V${y.toFixed(0)}`;
  if (y < 1338) red += bar; else green += bar;
}
document.getElementById("mr").setAttribute("d", red);
document.getElementById("mg").setAttribute("d", green);
```
